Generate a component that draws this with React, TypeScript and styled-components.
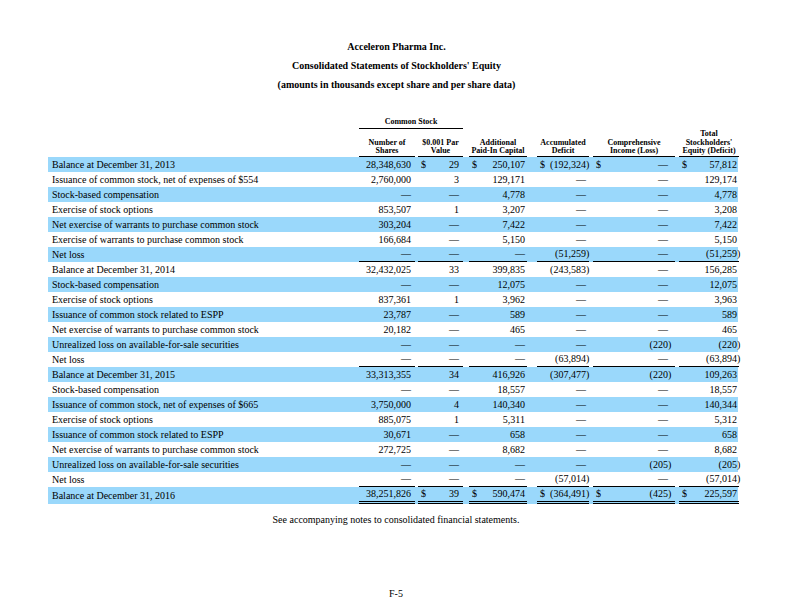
import React from "react";
import styled, { createGlobalStyle } from "styled-components";

const GlobalStyle = createGlobalStyle`
  html, body {
    margin: 0;
    padding: 0;
    background: #ffffff;
  }
  body {
    font-family: "Liberation Serif", "Times New Roman", serif;
    color: #000000;
  }
`;

type Col = { w: number; gap: number; pr: number; head: string[] };

// column widths / gaps measured off the printed statement
const cols: Col[] = [
  { w: 56, gap: 0, pr: 4, head: ["Number of", "Shares"] },
  { w: 45, gap: 3, pr: 4, head: ["$0.001 Par", "Value"] },
  { w: 58, gap: 6, pr: 2, head: ["Additional", "Paid-In Capital"] },
  { w: 52, gap: 10, pr: 3, head: ["Accumulated", "Deficit"] },
  { w: 82, gap: 4, pr: 7, head: ["Comprehensive", "Income (Loss)"] },
  { w: 60, gap: 4, pr: 2, head: ["Total", "Stockholders'", "Equity (Deficit)"] },
];

const template = `311px ${cols.map((c) => `${c.w + c.gap}px`).join(" ")}`;

type Rule = "none" | "single" | "double";

type Line = {
  label: string;
  values: string[];
  dollars?: boolean;
  rule?: Rule;
};

const D = "—";

const lines: Line[] = [
  { label: "Balance at December 31, 2013", values: ["28,348,630", "29", "250,107", "(192,324)", D, "57,812"], dollars: true },
  { label: "Issuance of common stock, net of expenses of $554", values: ["2,760,000", "3", "129,171", D, D, "129,174"] },
  { label: "Stock-based compensation", values: [D, D, "4,778", D, D, "4,778"] },
  { label: "Exercise of stock options", values: ["853,507", "1", "3,207", D, D, "3,208"] },
  { label: "Net exercise of warrants to purchase common stock", values: ["303,204", D, "7,422", D, D, "7,422"] },
  { label: "Exercise of warrants to purchase common stock", values: ["166,684", D, "5,150", D, D, "5,150"] },
  { label: "Net loss", values: [D, D, D, "(51,259)", D, "(51,259)"], rule: "single" },
  { label: "Balance at December 31, 2014", values: ["32,432,025", "33", "399,835", "(243,583)", D, "156,285"] },
  { label: "Stock-based compensation", values: [D, D, "12,075", D, D, "12,075"] },
  { label: "Exercise of stock options", values: ["837,361", "1", "3,962", D, D, "3,963"] },
  { label: "Issuance of common stock related to ESPP", values: ["23,787", D, "589", D, D, "589"] },
  { label: "Net exercise of warrants to purchase common stock", values: ["20,182", D, "465", D, D, "465"] },
  { label: "Unrealized loss on available-for-sale securities", values: [D, D, D, D, "(220)", "(220)"] },
  { label: "Net loss", values: [D, D, D, "(63,894)", D, "(63,894)"], rule: "single" },
  { label: "Balance at December 31, 2015", values: ["33,313,355", "34", "416,926", "(307,477)", "(220)", "109,263"] },
  { label: "Stock-based compensation", values: [D, D, "18,557", D, D, "18,557"] },
  { label: "Issuance of common stock, net of expenses of $665", values: ["3,750,000", "4", "140,340", D, D, "140,344"] },
  { label: "Exercise of stock options", values: ["885,075", "1", "5,311", D, D, "5,312"] },
  { label: "Issuance of common stock related to ESPP", values: ["30,671", D, "658", D, D, "658"] },
  { label: "Net exercise of warrants to purchase common stock", values: ["272,725", D, "8,682", D, D, "8,682"] },
  { label: "Unrealized loss on available-for-sale securities", values: [D, D, D, D, "(205)", "(205)"] },
  { label: "Net loss", values: [D, D, D, "(57,014)", D, "(57,014)"], rule: "single" },
  { label: "Balance at December 31, 2016", values: ["38,251,826", "39", "590,474", "(364,491)", "(425)", "225,597"], dollars: true, rule: "double" },
];

const Page = styled.div`
  width: 792px;
  padding-top: 37px;
`;

const Titles = styled.div`
  text-align: center;
  font-weight: bold;
  font-size: 10px;
  line-height: 19px;
  padding-left: 1px;
`;

const Table = styled.div`
  margin-left: 48px;
  width: 690px;
`;

const GroupRow = styled.div`
  display: grid;
  grid-template-columns: ${template};
  margin-top: 23px;
`;

const GroupCell = styled.div`
  grid-column: 2 / 4;
  text-align: center;
  font-weight: bold;
  font-size: 8px;
  line-height: 10px;
  padding-bottom: 1px;
  border-bottom: 1px solid #000;
`;

const HeadRow = styled.div`
  display: grid;
  grid-template-columns: ${template};
  align-items: end;
`;

const HeadCell = styled.div<{ $gap: number }>`
  margin-left: ${(p) => p.$gap}px;
  text-align: center;
  font-weight: bold;
  font-size: 8px;
  line-height: 8.5px;
  padding-top: 1px;
  border-bottom: 1px solid #000;
  white-space: nowrap;
`;

const Row = styled.div<{ $shade: boolean; $tall: boolean }>`
  display: grid;
  grid-template-columns: ${template};
  height: ${(p) => (p.$tall ? 17 : 15)}px;
  background: ${(p) => (p.$shade ? "#9ad8fb" : "transparent")};
  font-size: 10px;
`;

const Label = styled.div`
  display: flex;
  align-items: center;
  padding-left: 4px;
  white-space: nowrap;
`;

const Cell = styled.div<{ $gap: number; $pr: number; $rule: Rule }>`
  margin-left: ${(p) => p.$gap}px;
  display: flex;
  justify-content: space-between;
  align-items: center;
  padding: 0 ${(p) => p.$pr}px 0 3px;
  box-sizing: border-box;
  height: 100%;
  white-space: nowrap;
  border-bottom: ${(p) =>
    p.$rule === "single" ? "1px solid #000" : p.$rule === "double" ? "3px double #000" : "none"};
`;

const Close = styled.span`
  margin-right: -3.3px;
`;

const Notes = styled.p`
  margin: 10px 0 0;
  text-align: center;
  font-size: 10px;
  line-height: 12px;
`;

const Folio = styled.p`
  margin: 62px 0 0;
  text-align: center;
  font-size: 10px;
  line-height: 12px;
`;

function Amount({ v }: { v: string }) {
  if (v.startsWith("(")) {
    return (
      <span>
        {v.slice(0, -1)}
        <Close>)</Close>
      </span>
    );
  }
  return <span>{v}</span>;
}

export default function App() {
  return (
    <Page>
      <GlobalStyle />
      <Titles>
        <div>Acceleron Pharma Inc.</div>
        <div>Consolidated Statements of Stockholders' Equity</div>
        <div>(amounts in thousands except share and per share data)</div>
      </Titles>

      <Table>
        <GroupRow>
          <GroupCell>Common Stock</GroupCell>
        </GroupRow>
        <HeadRow>
          <div />
          {cols.map((c, i) => (
            <HeadCell key={i} $gap={c.gap}>
              {c.head.map((h, j) => (
                <div key={j}>{h}</div>
              ))}
            </HeadCell>
          ))}
        </HeadRow>

        {lines.map((line, r) => (
          <Row key={r} $shade={r % 2 === 0} $tall={line.rule === "double"}>
            <Label>{line.label}</Label>
            {line.values.map((v, i) => (
              <Cell key={i} $gap={cols[i].gap} $pr={cols[i].pr} $rule={line.rule || "none"}>
                <span>{line.dollars && i > 0 ? "$" : ""}</span>
                <Amount v={v} />
              </Cell>
            ))}
          </Row>
        ))}
      </Table>

      <Notes>See accompanying notes to consolidated financial statements.</Notes>
      <Folio>F-5</Folio>
    </Page>
  );
}
